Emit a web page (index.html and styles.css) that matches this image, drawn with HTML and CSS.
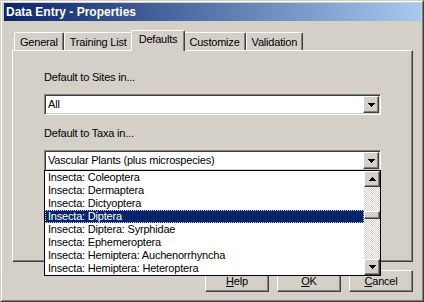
FILE: index.html
```html
<!DOCTYPE html>
<html lang="en">
<head>
    <meta charset="UTF-8">
    <title>Data Entry - Properties</title>
    <link rel="stylesheet" href="styles.css">
</head>
<body>

    <!-- Dialog Window -->
    <div class="window">
        <div class="frame">
            <div class="titlebar">
                <span class="title">Data Entry - Properties</span>
            </div>

            <div class="content">
                <!-- Tab Strip -->
                <div class="tabs">
                    <div class="tab">General</div>
                    <div class="tab">Training List</div>
                    <div class="tab active">Defaults</div>
                    <div class="tab">Customize</div>
                    <div class="tab">Validation</div>
                </div>

                <!-- Defaults Page -->
                <div class="panel">
                    <div class="label">Default to Sites in...</div>
                    <div class="combo">
                        <span class="combo-text">All</span>
                        <span class="raised drop-btn">
                            <svg width="7" height="4" viewBox="0 0 7 4" shape-rendering="crispEdges"><path d="M0 0h7v1h-1v1h-1v1h-1v1h-1v-1h-1v-1h-1v-1h-1z" fill="#000"/></svg>
                        </span>
                    </div>

                    <div class="label label-taxa">Default to Taxa in...</div>
                    <div class="combo-wrap">
                        <div class="combo">
                            <span class="combo-text">Vascular Plants (plus microspecies)</span>
                            <span class="raised drop-btn">
                                <svg width="7" height="4" viewBox="0 0 7 4" shape-rendering="crispEdges"><path d="M0 0h7v1h-1v1h-1v1h-1v1h-1v-1h-1v-1h-1v-1h-1z" fill="#000"/></svg>
                            </span>
                        </div>

                        <!-- Open drop-down list -->
                        <div class="droplist">
                            <ul class="items">
                                <li>Insecta: Coleoptera</li>
                                <li>Insecta: Dermaptera</li>
                                <li>Insecta: Dictyoptera</li>
                                <li class="selected">Insecta: Diptera</li>
                                <li>Insecta: Diptera: Syrphidae</li>
                                <li>Insecta: Ephemeroptera</li>
                                <li>Insecta: Hemiptera: Auchenorrhyncha</li>
                                <li>Insecta: Hemiptera: Heteroptera</li>
                            </ul>
                            <div class="scrollbar">
                                <span class="raised scroll-btn">
                                    <svg width="7" height="4" viewBox="0 0 7 4" shape-rendering="crispEdges"><path d="M3 0h1v1h1v1h1v1h1v1h-7v-1h1v-1h1v-1h1z" fill="#000"/></svg>
                                </span>
                                <div class="track">
                                    <span class="raised thumb"></span>
                                </div>
                                <span class="raised scroll-btn">
                                    <svg width="7" height="4" viewBox="0 0 7 4" shape-rendering="crispEdges"><path d="M0 0h7v1h-1v1h-1v1h-1v1h-1v-1h-1v-1h-1v-1h-1z" fill="#000"/></svg>
                                </span>
                            </div>
                        </div>
                    </div>
                </div>

                <!-- Dialog Buttons -->
                <div class="buttons">
                    <button class="raised btn"><u>H</u>elp</button>
                    <button class="raised btn"><u>O</u>K</button>
                    <button class="raised btn"><u>C</u>ancel</button>
                </div>
            </div>
        </div>
    </div>

</body>
</html>
```

FILE: styles.css
```css
/* General Styles */
body {
    margin: 0;
    padding: 0;
    width: 424px;
    height: 302px;
    overflow: hidden;
    background-color: #d4d0c8;
    font-family: 'Liberation Sans', Arial, sans-serif;
    font-size: 11px;
    letter-spacing: -0.2px;
    color: #000;
}

/* Window Frame */
.window {
    box-sizing: border-box;
    width: 424px;
    height: 302px;
    border: 1px solid;
    border-color: #d4d0c8 #404040 #404040 #d4d0c8;
}

.frame {
    box-sizing: border-box;
    height: 100%;
    border: 1px solid;
    border-color: #fff #808080 #808080 #fff;
    padding: 1px 1px 1px 2px;
}

.titlebar {
    height: 18px;
    background: linear-gradient(to right, #0a246a, #a6caf0);
    padding-left: 2px;
    display: flex;
    align-items: center;
}

.title {
    color: #fff;
    font-weight: bold;
    font-size: 12px;
    letter-spacing: 0;
}

.content {
    padding: 9px 8px 0 8px;
}

/* Raised 3D look shared by buttons */
.raised {
    box-sizing: border-box;
    background-color: #d4d0c8;
    border: 1px solid;
    border-color: #fff #404040 #404040 #fff;
    box-shadow: inset -1px -1px #808080;
}

/* Tabs */
.tabs {
    display: flex;
    align-items: flex-end;
    height: 20px;
    padding-left: 2px;
}

.tab {
    box-sizing: border-box;
    height: 18px;
    padding: 3px 5px 0;
    line-height: 13px;
    border-top: 1px solid #fff;
    border-left: 1px solid #fff;
    border-right: 1px solid #404040;
    box-shadow: inset -1px 0 #808080;
    border-radius: 2px 2px 0 0;
    background-color: #d4d0c8;
    white-space: nowrap;
}

.tab.active {
    position: relative;
    z-index: 1;
    height: 21px;
    margin: 0 -2px -1px;
    padding: 2px 7px 0;
}

/* Tab Page */
.panel {
    box-sizing: border-box;
    height: 212px;
    padding: 20px 30px 0 31px;
    border: 1px solid;
    border-color: #fff #404040 #404040 #fff;
    box-shadow: inset -1px -1px #808080;
}

.label {
    line-height: 13px;
    margin-bottom: 10px;
}

.label-taxa {
    margin-top: 12px;
}

/* Combo Boxes */
.combo {
    box-sizing: border-box;
    display: flex;
    width: 337px;
    height: 21px;
    background-color: #fff;
    border: 1px solid;
    border-color: #808080 #fff #fff #808080;
    box-shadow: inset 1px 1px #404040, inset -1px -1px #d4d0c8;
}

.combo-text {
    flex: 1;
    padding-left: 3px;
    line-height: 19px;
    white-space: nowrap;
}

.drop-btn {
    width: 16px;
    margin: 1px;
    display: flex;
    align-items: center;
    justify-content: center;
}

.combo-wrap {
    position: relative;
}

/* Drop-down list overlay */
.droplist {
    position: absolute;
    top: 20px;
    left: 0;
    z-index: 2;
    box-sizing: border-box;
    width: 337px;
    height: 106px;
    display: flex;
    background-color: #fff;
    border: 1px solid #000;
}

.items {
    flex: 1;
    list-style: none;
    margin: 0;
    padding: 0;
}

.items li {
    height: 13px;
    line-height: 13px;
    padding-left: 3px;
    white-space: nowrap;
}

.items li.selected {
    background-color: #0a246a;
    color: #fff;
    outline: 1px dotted #c8d0e8;
    outline-offset: -1px;
}

.scrollbar {
    width: 16px;
    display: flex;
    flex-direction: column;
}

.scroll-btn {
    height: 16px;
    display: flex;
    align-items: center;
    justify-content: center;
}

.track {
    flex: 1;
    background: repeating-conic-gradient(#fff 0 25%, #d4d0c8 0 50%) 0 0 / 2px 2px;
}

.thumb {
    display: block;
    height: 8px;
    margin-top: 24px;
}

/* Dialog Buttons */
.buttons {
    display: flex;
    justify-content: flex-end;
    gap: 8px;
    margin-top: 8px;
}

.btn {
    width: 64px;
    height: 22px;
    padding: 0;
    font-family: inherit;
    font-size: 11px;
    letter-spacing: -0.2px;
    color: #000;
}
```
